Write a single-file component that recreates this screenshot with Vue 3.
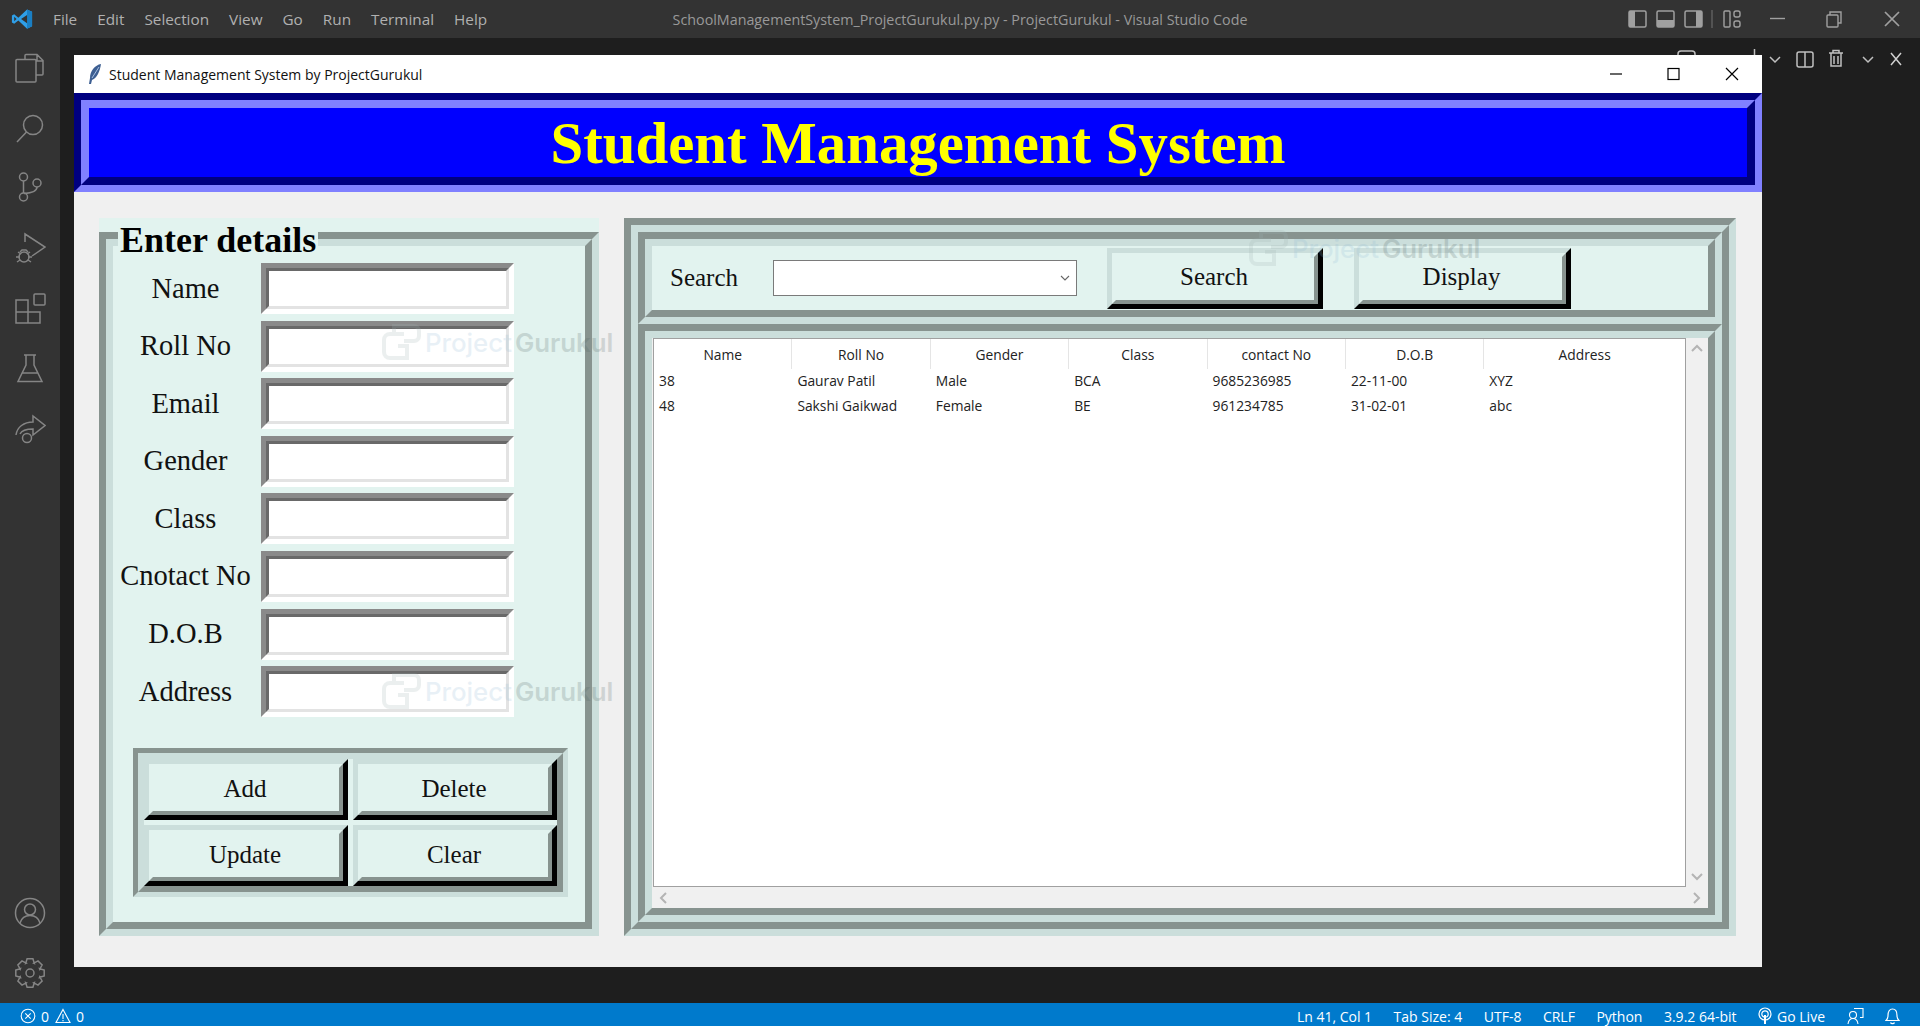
<template>
  <div class="vscode">
    <header class="titlebar">
      <nav class="menu">
        <svg class="vs-logo" width="22" height="22" viewBox="0 0 24 24">
          <path d="M17.5 1.5 23 4v16l-5.5 2.5L8 13.5l-4.5 3.6L1 15.800V8.200l2.500-1.300L8 10.500z" fill="#2f9fe8" />
          <path d="M17.500 1.500 23 4v16l-5.500 2.500z" fill="#1a7fc4" />
          <path d="M17.500 7.500 11 12l6.500 4.500z" fill="#333" />
          <path d="M3.500 9.500 6 12l-2.500 2.500z" fill="#333" />
        </svg>
        <span v-for="item in menuItems" :key="item">{{ item }}</span>
      </nav>
      <div class="app-title">SchoolManagementSystem_ProjectGurukul.py.py - ProjectGurukul - Visual Studio Code</div>
      <svg class="title-actions" width="300" height="38" viewBox="0 0 300 38">
        <g fill="none" stroke="#a0a0a0" stroke-width="1.500">
          <rect x="9" y="11" width="17" height="16" rx="1.500" />
          <rect x="37" y="11" width="17" height="16" rx="1.500" />
          <rect x="65" y="11" width="17" height="16" rx="1.500" />
        </g>
        <rect x="9" y="11" width="6" height="16" fill="#a0a0a0" />
        <rect x="37" y="20" width="17" height="7" fill="#a0a0a0" />
        <rect x="76" y="11" width="6" height="16" fill="#a0a0a0" />
        <path d="M92 10v18" stroke="#6a6a6a" stroke-width="1.200" />
        <g fill="none" stroke="#a0a0a0" stroke-width="1.400">
          <rect x="104" y="11" width="6" height="16" rx="1" />
          <rect x="114" y="11" width="6" height="6" rx="2" />
          <rect x="114" y="21" width="6" height="6" rx="2" />
          <path d="M150 18.500h15" />
          <rect x="207" y="15" width="11" height="12" rx="1" />
          <path d="M210 15v-3h11v11h-3" />
          <path d="M265 12l14 14M279 12l-14 14" stroke-width="1.700" />
        </g>
      </svg>
    </header>

    <div class="workspace">
      <aside class="sidebar">
        <div class="side-group">
          <svg v-for="icon in topIcons" :key="icon.name" width="32" height="32" viewBox="0 0 32 32" fill="none" stroke="#858585" stroke-width="1.500">
            <path :d="icon.d" />
            <circle v-for="(c, i) in icon.circles" :key="i" :cx="c[0]" :cy="c[1]" :r="c[2]" />
          </svg>
        </div>
        <div class="side-group">
          <svg width="32" height="32" viewBox="0 0 32 32" fill="none" stroke="#858585" stroke-width="1.500">
            <circle cx="16" cy="16" r="14.500" />
            <circle cx="16" cy="12.500" r="5.500" />
            <path d="M6 26c1.500-5 5-7.500 10-7.500s8.500 2.500 10 7.500" />
          </svg>
          <svg width="32" height="32" viewBox="0 0 32 32" fill="none" stroke="#858585" stroke-width="1.500">
            <path :d="gearPath" />
            <circle cx="16" cy="16" r="4" />
          </svg>
        </div>
      </aside>

      <main class="editor">
        <!-- terminal toolbar, mostly hidden by the tk window -->
        <svg class="panel-actions" width="300" height="42" viewBox="0 0 300 42">
          <g fill="none" stroke="#c0c0c0" stroke-width="1.500">
            <rect x="58" y="13" width="17" height="20" rx="3" />
            <path d="M134.500 11v10" />
            <path d="M150 19l5 5 5-5" />
            <rect x="177" y="14" width="16" height="15" rx="2" />
            <path d="M185 14v15" />
            <path d="M209 15h14M213 15v-2.500h6v2.500M211 15v13h10V15M214 18v8M218 18v8" />
            <path d="M243 19l5 5 5-5" />
            <path d="M271 15l10 12M281 15l-10 12" stroke="#d0d0d0" />
          </g>
        </svg>

        <section class="tk-window">
          <div class="tk-titlebar">
            <svg class="feather" width="14" height="22" viewBox="0 0 14 22">
              <path d="M13 1C7 2 2 8 2 15l-1 6 2 0 1-4c5-2 8-9 9-16z" fill="#3d5f92" />
              <path d="M11 4 4 15" stroke="#a9c2e6" stroke-width="1" />
            </svg>
            <span class="tk-title">Student Management System by ProjectGurukul</span>
            <svg class="tk-controls" width="170" height="38" viewBox="0 0 170 38">
              <g fill="none" stroke="#000" stroke-width="1.200">
                <path d="M22 19h12" />
                <rect x="80" y="13.500" width="11" height="11" />
                <path d="M138 13l12 12M150 13l-12 12" />
              </g>
            </svg>
          </div>

          <div class="tk-heading">
            <div class="tk-heading-in">Student Management System</div>
          </div>

          <div class="tk-body">
            <div class="details-panel">
              <span class="legend">Enter details</span>
              <div class="groove details-frame">
                <div class="groove-in details-in">
                  <div class="form-grid">
                    <template v-for="field in fields" :key="field">
                      <label class="field-label">{{ field }}</label>
                      <div class="entry"><div class="entry-in"></div></div>
                    </template>
                  </div>
                  <div class="groove-thin actions">
                    <div class="groove-thin-in action-grid">
                      <button v-for="b in actionButtons" :key="b" class="tk-btn"><span>{{ b }}</span></button>
                    </div>
                  </div>
                </div>
              </div>
            </div>

            <div class="groove data-panel">
              <div class="groove-in data-in">
                <div class="groove search-frame">
                  <div class="groove-in search-row">
                    <span class="search-label">Search</span>
                    <div class="combo">
                      <svg width="10" height="6" viewBox="0 0 10 6"><path d="M1 1l4 4 4-4" fill="none" stroke="#666" stroke-width="1.100" /></svg>
                    </div>
                    <button class="tk-btn search-btn"><span>Search</span></button>
                    <button class="tk-btn display-btn"><span>Display</span></button>
                  </div>
                </div>

                <div class="groove table-frame">
                  <div class="groove-in table-in">
                    <div class="table-row-wrap">
                      <div class="tree">
                        <div class="tree-head">
                          <div v-for="col in columns" :key="col" class="head-cell">{{ col }}</div>
                        </div>
                        <div v-for="row in rows" :key="row[0]" class="tree-row">
                          <div v-for="(cell, i) in row" :key="i" class="tree-cell">{{ cell }}</div>
                        </div>
                      </div>
                      <div class="vscroll">
                        <svg width="14" height="9" viewBox="0 0 14 9"><path d="M2 7l5-5 5 5" class="arrow" /></svg>
                        <svg width="14" height="9" viewBox="0 0 14 9"><path d="M2 2l5 5 5-5" class="arrow" /></svg>
                      </div>
                    </div>
                    <div class="hscroll">
                      <svg width="9" height="14" viewBox="0 0 9 14"><path d="M7 2L2 7l5 5" class="arrow" /></svg>
                      <svg width="9" height="14" viewBox="0 0 9 14"><path d="M2 2l5 5-5 5" class="arrow" /></svg>
                    </div>
                  </div>
                </div>
              </div>
            </div>
          </div>

          <!-- site watermark laid over the screenshot -->
          <div v-for="(mark, i) in watermarks" :key="i" class="watermark" :style="{ left: mark.x + 'px', top: mark.y + 'px' }">
            <svg width="40" height="38" viewBox="0 0 40 38" fill="none" stroke="#9fb2b2" stroke-width="4">
              <path d="M12 12V3h20a5 5 0 0 1 5 5v5a5 5 0 0 1-5 5H22" />
              <path d="M22 11H8a6 6 0 0 0-6 6v12a6 6 0 0 0 6 6h17V23h-9" />
            </svg>
            <span class="wm-a">Project</span>
            <span class="wm-b">Gurukul</span>
          </div>
        </section>
      </main>
    </div>

    <footer class="statusbar">
      <div class="status-left">
        <svg width="16" height="16" viewBox="0 0 16 16" fill="none" stroke="#fff" stroke-width="1.100">
          <circle cx="8" cy="8" r="6.800" />
          <path d="M5.300 5.300l5.400 5.400M10.700 5.300l-5.400 5.400" />
        </svg>
        <span>0</span>
        <svg class="warn" width="16" height="16" viewBox="0 0 16 16" fill="none" stroke="#fff" stroke-width="1.100">
          <path d="M8 1.500 15 14.500H1z" />
          <path d="M8 6v5M8 12v1.200" />
        </svg>
        <span>0</span>
      </div>
      <div class="status-right">
        <span>Ln 41, Col 1</span>
        <span>Tab Size: 4</span>
        <span>UTF-8</span>
        <span>CRLF</span>
        <span>Python</span>
        <span>3.9.2 64-bit</span>
        <span class="golive">
          <svg width="14" height="18" viewBox="0 0 14 18" fill="none" stroke="#fff" stroke-width="1.200">
            <circle cx="7" cy="7" r="6" />
            <circle cx="7" cy="7" r="3.200" />
            <path d="M7 8v9" stroke-width="2" />
          </svg>
          Go Live
        </span>
        <svg width="17" height="18" viewBox="0 0 17 18" fill="none" stroke="#fff" stroke-width="1.100">
          <path d="M7 1.500h9v9h-3" />
          <circle cx="6" cy="8" r="3.500" />
          <path d="M1 17c.5-3.500 2.500-5.500 5-5.500s4.500 2 5 5.500" />
        </svg>
        <svg width="15" height="18" viewBox="0 0 15 18" fill="none" stroke="#fff" stroke-width="1.200">
          <path d="M1 13.500c1.500-1 2-2.500 2-5C3 4.500 4.500 2 7.500 2s4.500 2.500 4.500 6.500c0 2.500.5 4 2 5z" />
          <path d="M5.500 15.500c.5 1.500 3.500 1.500 4 0" />
        </svg>
      </div>
    </footer>
  </div>
</template>

<script setup>
  const menuItems = ["File", "Edit", "Selection", "View", "Go", "Run", "Terminal", "Help"];

  const fields = ["Name", "Roll No", "Email", "Gender", "Class", "Cnotact No", "D.O.B", "Address"];
  const actionButtons = ["Add", "Delete", "Update", "Clear"];

  const columns = ["Name", "Roll No", "Gender", "Class", "contact No", "D.O.B", "Address"];
  const rows = [
    ["38", "Gaurav Patil", "Male", "BCA", "9685236985", "22-11-00", "XYZ"],
    ["48", "Sakshi Gaikwad", "Female", "BE", "961234785", "31-02-01", "abc"],
  ];

  // offsets inside the tk window
  const watermarks = [
    { x: 308, y: 268 },
    { x: 308, y: 617 },
    { x: 1175, y: 174 },
  ];

  const topIcons = [
    {
      name: "files",
      d: "M11 7V3.500a1 1 0 0 1 1-1h11l6 6V22a1 1 0 0 1-1 1h-6M23 2.500V9h6M3 7.500h18a1 1 0 0 1 1 1V29a1 1 0 0 1-1 1H3a1 1 0 0 1-1-1V8.500a1 1 0 0 1 1-1z",
      circles: [],
    },
    { name: "search", d: "M12.500 20 3 30", circles: [[19, 13, 9.5]] },
    {
      name: "scm",
      d: "M9.500 9v12M23 15c0 4-5 6-13 6.500",
      circles: [[9.5, 5, 4], [9.5, 25, 4], [23, 11, 4]],
    },
    {
      name: "debug",
      d: "M11 10V2l20 13-13 9M4 20l3 2M16 20l-3 2M2 25h4M18 25h-4M3 30l3-2M17 30l-3-2M6 20l2-2h4l2 2",
      circles: [[10, 25, 5]],
    },
    {
      name: "extensions",
      d: "M2 8h12v12h12v11H2zM2 20h12v11M21 2h9a1 1 0 0 1 1 1v9a1 1 0 0 1-1 1h-9a1 1 0 0 1-1-1V3a1 1 0 0 1 1-1z",
      circles: [],
    },
    { name: "testing", d: "M10 3h12M12 3v10L4 29.500h24L20 13V3M8 21h16", circles: [] },
    {
      name: "liveshare",
      d: "M2 23c1-8 8-13 17-13V4l12 9.500L19 23v-6c-6 0-11 1-13 5",
      circles: [[13, 26, 4.5]],
    },
  ];

  // cog outline, 8 teeth around the centre of a 32 box
  const buildGear = () => {
    const pts = [];
    for (let i = 0; i < 8; i++) {
      const a = (i * Math.PI) / 4;
      [[-0.42, 10.5], [-0.2, 14.5], [0.2, 14.5], [0.42, 10.5]].forEach(([da, r]) => {
        pts.push(`${(16 + r * Math.cos(a + da)).toFixed(1)} ${(16 + r * Math.sin(a + da)).toFixed(1)}`);
      });
    }
    return "M" + pts.join("L") + "z";
  };
  const gearPath = buildGear();
</script>

<style>
  html,
  body {
    margin: 0;
    background: #1e1e1e;
    overflow: hidden;
  }
</style>

<style scoped>
  * {
    box-sizing: border-box;
  }

  .vscode {
    width: 1920px;
    height: 1026px;
    display: flex;
    flex-direction: column;
    font-family: "Open Sans", sans-serif;
    background: #1e1e1e;
    overflow: hidden;
  }

  .titlebar {
    height: 38px;
    flex-shrink: 0;
    background: #333333;
    display: grid;
    grid-template-columns: 1fr auto 1fr;
    align-items: center;
    font-size: 15.3px;
    color: #b0b0b0;
  }

  .menu {
    display: flex;
    align-items: center;
    gap: 20px;
    padding-left: 11px;
  }

  .vs-logo {
    margin-right: 0;
  }

  .app-title {
    color: #999999;
    font-size: 14.3px;
  }

  .title-actions {
    justify-self: end;
  }

  .workspace {
    flex: 1;
    display: flex;
    min-height: 0;
  }

  .sidebar {
    width: 60px;
    background: #333333;
    display: flex;
    flex-direction: column;
    justify-content: space-between;
    align-items: center;
    padding: 14px 0;
  }

  .side-group {
    display: flex;
    flex-direction: column;
    gap: 28px;
  }

  .side-group svg {
    display: block;
  }

  .editor {
    flex: 1;
    position: relative;
    padding: 17px 0 0 14px;
  }

  .panel-actions {
    position: absolute;
    right: 0;
    top: 0;
  }

  .tk-window {
    position: relative;
    width: 1688px;
    height: 912px;
    background: #f0f0f0;
    display: flex;
    flex-direction: column;
  }

  .tk-titlebar {
    height: 38px;
    flex-shrink: 0;
    background: #ffffff;
    display: flex;
    align-items: center;
    padding-left: 14px;
  }

  .feather {
    margin-right: 7px;
  }

  .tk-title {
    font-size: 14px;
    color: #111111;
  }

  .tk-controls {
    margin-left: auto;
    margin-right: 4px;
  }

  .tk-heading {
    height: 99px;
    flex-shrink: 0;
    border: 7px solid;
    border-color: #000080 #8080ff #8080ff #000080;
  }

  .tk-heading-in {
    height: 100%;
    border: 8px solid;
    border-color: #8080ff #000080 #000080 #8080ff;
    background: #0000ff;
    display: flex;
    align-items: center;
    justify-content: center;
    padding-top: 2px;
    font-family: "Liberation Serif", serif;
    font-weight: 700;
    font-size: 58.8px;
    color: #ffff00;
  }

  .tk-body {
    flex: 1;
    display: flex;
    gap: 25px;
    padding: 26px 26px 31px 25px;
    min-height: 0;
    font-family: "Liberation Serif", serif;
    color: #111111;
  }

  .groove {
    border: 7px solid;
    border-color: #87938f #cbdedb #cbdedb #87938f;
  }

  .groove-in {
    height: 100%;
    border: 7px solid;
    border-color: #cbdedb #87938f #87938f #cbdedb;
    background: #e2f3ef;
  }

  .groove-thin {
    border: 5px solid;
    border-color: #87938f #cbdedb #cbdedb #87938f;
  }

  .groove-thin-in {
    border: 6px solid;
    border-color: #cbdedb #87938f #87938f #cbdedb;
  }

  .details-panel {
    position: relative;
    width: 500px;
    background: #e2f3ef;
    display: flex;
    flex-direction: column;
    padding-top: 14px;
  }

  .legend {
    position: absolute;
    left: 19px;
    top: 0;
    height: 32px;
    padding: 0 2px;
    background: #e2f3ef;
    font-size: 36px;
    font-weight: 700;
    line-height: 44px;
    color: #000000;
  }

  .details-frame {
    flex: 1;
  }

  .details-in {
    padding: 17px 0 0 7px;
  }

  .form-grid {
    display: grid;
    grid-template-columns: 131px 253px;
    column-gap: 9.5px;
    row-gap: 6.6px;
    grid-auto-rows: 51px;
    align-items: center;
  }

  .field-label {
    text-align: center;
    font-size: 28.500px;
    white-space: nowrap;
  }

  .entry {
    height: 51px;
    border: 5px solid;
    border-color: #8a8a8a #ffffff #ffffff #8a8a8a;
  }

  .entry-in {
    height: 100%;
    background: #ffffff;
    border: 3px solid;
    border-color: #696969 #e3e3e3 #e3e3e3 #696969;
  }

  .actions {
    width: 435px;
    margin: 31px 0 0 13px;
  }

  .action-grid {
    display: grid;
    grid-template-columns: 204px 204px;
    grid-auto-rows: 61px;
    gap: 5px;
  }

  .tk-btn {
    display: block;
    padding: 0;
    border: 5px solid;
    border-color: #cbdedb #000000 #000000 #cbdedb;
    background: #e2f3ef;
    font-family: "Liberation Serif", serif;
    font-size: 25px;
    color: #111111;
  }

  .tk-btn span {
    display: flex;
    align-items: center;
    justify-content: center;
    height: 100%;
    padding-bottom: 2px;
    padding-right: 2px;
    border: 4px solid;
    border-color: #e2f3ef #87938f #87938f #e2f3ef;
  }

  .data-panel {
    flex: 1;
    min-width: 0;
  }

  .data-in {
    display: flex;
    flex-direction: column;
  }

  .search-frame {
    height: 92px;
    flex-shrink: 0;
  }

  .search-row {
    display: flex;
    align-items: center;
    padding-left: 18px;
    font-size: 25px;
  }

  .search-label {
    width: 103px;
    flex-shrink: 0;
  }

  .combo {
    width: 304px;
    height: 36px;
    flex-shrink: 0;
    background: #ffffff;
    border: 1px solid #7a7a7a;
    display: flex;
    align-items: center;
    justify-content: flex-end;
    padding-right: 6px;
  }

  .search-btn {
    width: 216px;
    height: 61px;
    margin-left: 30px;
  }

  .display-btn {
    width: 217px;
    height: 61px;
    margin-left: 31px;
  }

  .table-frame {
    flex: 1;
    min-height: 0;
  }

  .table-in {
    display: flex;
    flex-direction: column;
    background: #f0f0f0;
  }

  .table-row-wrap {
    flex: 1;
    display: flex;
    min-height: 0;
  }

  .tree {
    flex: 1;
    margin-left: 1px;
    background: #ffffff;
    border: 1px solid #a0a0a0;
    font-family: "Open Sans", sans-serif;
    font-size: 13.8px;
    color: #222222;
  }

  .tree-head {
    display: grid;
    grid-template-columns: repeat(6, 138.4px) 1fr;
    height: 30px;
  }

  .head-cell {
    display: flex;
    align-items: center;
    justify-content: center;
    height: 30px;
    border-right: 1px solid #e5e5e5;
  }

  .head-cell:last-child {
    border-right: none;
  }

  .tree-row {
    display: grid;
    grid-template-columns: repeat(6, 138.4px) 1fr;
    height: 24.500px;
    line-height: 24.500px;
  }

  .tree-cell {
    padding-left: 5px;
    white-space: nowrap;
  }

  .vscroll {
    width: 22px;
    flex-shrink: 0;
    display: flex;
    flex-direction: column;
    justify-content: space-between;
    align-items: center;
    padding: 6px 0 6px;
  }

  .hscroll {
    height: 21px;
    flex-shrink: 0;
    display: flex;
    align-items: center;
    justify-content: space-between;
    padding: 0 7px 0 7px;
  }

  .arrow {
    fill: none;
    stroke: #b4b4b4;
    stroke-width: 2;
  }

  .watermark {
    position: absolute;
    display: flex;
    align-items: center;
    gap: 3px;
    opacity: 0.2;
    pointer-events: none;
    font-family: Inter, sans-serif;
    font-size: 25.8px;
    white-space: nowrap;
  }

  .wm-a {
    color: #8fb8d4;
    font-weight: 500;
  }

  .wm-b {
    color: #4f6262;
    font-weight: 600;
  }

  .statusbar {
    height: 23px;
    flex-shrink: 0;
    background: #007acc;
    display: flex;
    justify-content: space-between;
    align-items: center;
    padding: 3px 20px 0 20px;
    color: #ffffff;
    font-size: 14px;
  }

  .status-left,
  .status-right {
    display: flex;
    align-items: center;
  }

  .status-left {
    gap: 5px;
  }

  .warn {
    margin-left: 1px;
  }

  .status-right {
    gap: 21.5px;
  }

  .golive {
    display: flex;
    align-items: center;
    gap: 5px;
  }
</style>
